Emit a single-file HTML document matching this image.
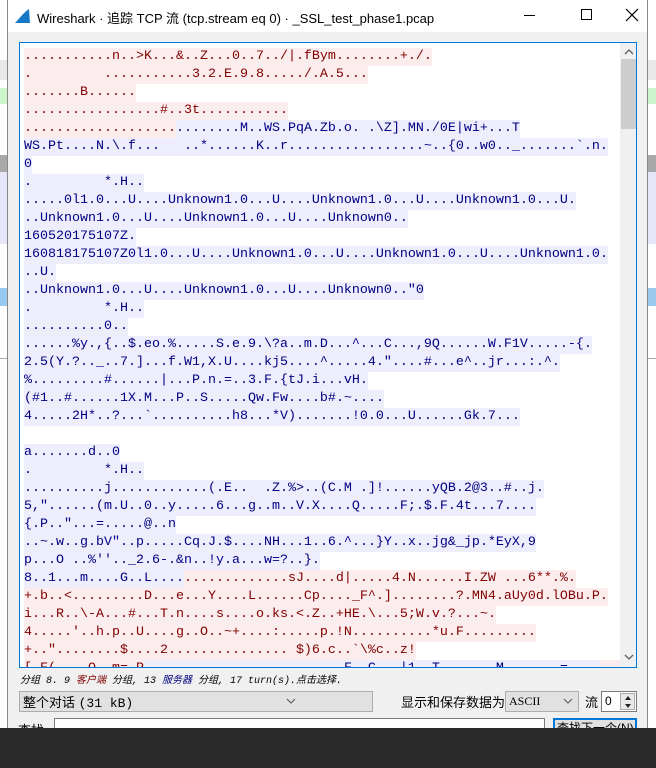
<!DOCTYPE html>
<html><head><meta charset="utf-8"><style>
*{margin:0;padding:0;box-sizing:border-box}
body{width:656px;height:768px;overflow:hidden;background:#fff;position:relative;font-family:"Liberation Sans","Noto Sans CJK SC",sans-serif}
.abs{position:absolute}
#dlg{left:7px;top:0;width:641px;height:728px;background:#f0f0f0;border-left:1px solid #888;border-right:1px solid #888}
#title{left:8px;top:0;width:639px;height:32px;background:#fff}
#ta{left:19px;top:42px;width:618px;height:626px;border:1px solid #0078d7;background:#fff;overflow:hidden}
#txt{position:absolute;left:4px;top:5px;font-family:"Liberation Mono",monospace;font-size:13.33px;line-height:18px}
.ln{height:18px;white-space:pre}
.ln span{display:inline-block;height:18px;vertical-align:top}
.r{background:#fbeded;color:#800000}
.b{background:#ededfb;color:#000080}
</style></head><body>
<div class="abs" style="left:0;top:60px;width:8px;height:20px;background:#e8e8e8"></div>
<div class="abs" style="left:0;top:88px;width:8px;height:16px;background:#ccf5cc"></div>
<div class="abs" style="left:0;top:155px;width:8px;height:17px;background:#a8a8a8"></div>
<div class="abs" style="left:0;top:172px;width:8px;height:72px;background:#e6e6fa"></div>
<div class="abs" style="left:0;top:288px;width:8px;height:18px;background:#99c9ef"></div>
<div class="abs" style="left:0;top:358px;width:8px;height:1px;background:#aaa"></div>
<div class="abs" style="left:648px;top:60px;width:8px;height:20px;background:#e8e8e8"></div>
<div class="abs" style="left:648px;top:88px;width:8px;height:16px;background:#ccf5cc"></div>
<div class="abs" style="left:648px;top:155px;width:8px;height:17px;background:#a8a8a8"></div>
<div class="abs" style="left:648px;top:172px;width:8px;height:72px;background:#e6e6fa"></div>
<div class="abs" style="left:648px;top:288px;width:8px;height:18px;background:#99c9ef"></div>
<div class="abs" style="left:648px;top:358px;width:8px;height:1px;background:#aaa"></div>

<div id="dlg" class="abs"></div>
<div id="title" class="abs">
<svg class="abs" style="left:6px;top:7px" width="18" height="18" viewBox="0 0 18 18"><path d="M1 16 C5 12 9 6 15 2 L16 16 Z" fill="#1679c7"/></svg>
<div class="abs" style="left:29px;top:8px;font-size:13px;color:#000;white-space:nowrap">Wireshark · 追踪 TCP 流 (tcp.stream eq 0) · _SSL_test_phase1.pcap</div>
<div class="abs" style="left:516px;top:15px;width:11px;height:1px;background:#000"></div>
<div class="abs" style="left:573px;top:9px;width:11px;height:11px;border:1px solid #000"></div>
<svg class="abs" style="left:617px;top:8px" width="14" height="14"><path d="M1 1L13 13M13 1L1 13" stroke="#000" stroke-width="1.2"/></svg>
</div>

<div id="ta" class="abs">
<div id="txt">
<div class="ln"><span class="r">...........n..&gt;K...&amp;..Z...0..7../|.fBym........+./.</span></div>
<div class="ln"><span class="r">.         ...........3.2.E.9.8...../.A.5...</span></div>
<div class="ln"><span class="r">.......B......</span></div>
<div class="ln"><span class="r">.................#..3t...........</span></div>
<div class="ln"><span class="r">...................</span><span class="b">........M..WS.PqA.Zb.o. .\Z].MN./0E|wi+...T</span></div>
<div class="ln"><span class="b">WS.Pt....N.\.f...   ..*......K..r.................~..{0..w0.._.......`.n.</span></div>
<div class="ln"><span class="b">0</span></div>
<div class="ln"><span class="b">.         *.H..</span></div>
<div class="ln"><span class="b">.....0l1.0...U....Unknown1.0...U....Unknown1.0...U....Unknown1.0...U.</span></div>
<div class="ln"><span class="b">..Unknown1.0...U....Unknown1.0...U....Unknown0..</span></div>
<div class="ln"><span class="b">160520175107Z.</span></div>
<div class="ln"><span class="b">160818175107Z0l1.0...U....Unknown1.0...U....Unknown1.0...U....Unknown1.0.</span></div>
<div class="ln"><span class="b">..U.</span></div>
<div class="ln"><span class="b">..Unknown1.0...U....Unknown1.0...U....Unknown0.."0</span></div>
<div class="ln"><span class="b">.         *.H..</span></div>
<div class="ln"><span class="b">..........0..</span></div>
<div class="ln"><span class="b">......%y.,{..$.eo.%.....S.e.9.\?a..m.D...^...C...,9Q......W.F1V.....-{.</span></div>
<div class="ln"><span class="b">2.5(Y.?.._..7.]...f.W1,X.U....kj5....^.....4."....#...e^..jr...:.^.</span></div>
<div class="ln"><span class="b">%.........#......|...P.n.=..3.F.{tJ.i...vH.</span></div>
<div class="ln"><span class="b">(#1..#......1X.M...P..S.....Qw.Fw....b#.~....</span></div>
<div class="ln"><span class="b">4.....2H*..?...`..........h8...*V).......!0.0...U......Gk.7...</span></div>
<div class="ln"></div>
<div class="ln"><span class="b">a.......d..0</span></div>
<div class="ln"><span class="b">.         *.H..</span></div>
<div class="ln"><span class="b">..........j............(.E..  .Z.%&gt;..(C.M .]!......yQB.2@3..#..j.</span></div>
<div class="ln"><span class="b">5,"......(m.U..0..y.....6...g..m..V.X....Q.....F;.$.F.4t...7....</span></div>
<div class="ln"><span class="b">{.P.."...=.....@..n</span></div>
<div class="ln"><span class="b">..~.w..g.bV"..p.....Cq.J.$....NH...1..6.^...}Y..x..jg&amp;_jp.*EyX,9</span></div>
<div class="ln"><span class="b">p...O ..%''.._2.6-.&amp;n..!y.a...w=?..}.</span></div>
<div class="ln"><span class="b">8..1...m....G..L....</span><span class="r">.............sJ....d|.....4.N......I.ZW ...6**.%.</span></div>
<div class="ln"><span class="r">+.b..&lt;.........D...e...Y....L......Cp...._F^.]........?.MN4.aUy0d.lOBu.P.</span></div>
<div class="ln"><span class="r">i...R..\-A...#...T.n....s....o.ks.&lt;.Z..+HE.\...5;W.v.?...~.</span></div>
<div class="ln"><span class="r">4.....'..h.p..U....g..O..~+....:.....p.!N..........*u.F.........</span></div>
<div class="ln"><span class="r">+.."........$....2............... $)6.c..`\%c..z!</span></div>
<div class="ln"><span class="r">[.F(....O..m=.P</span><span class="b">.........................F..C...|1..T.......M.......=....</span><span class="r">..........^..</span></div>
</div>
<div class="abs" style="left:600px;top:0;width:17px;height:624px;background:#f0f0f0"></div>
<div class="abs" style="left:601px;top:16px;width:15px;height:70px;background:#cdcdcd"></div>
<svg class="abs" style="left:604px;top:6px" width="10" height="6"><path d="M1 5L5 1L9 5" stroke="#606060" fill="none" stroke-width="1.3"/></svg>
<svg class="abs" style="left:604px;top:611px" width="10" height="6"><path d="M1 1L5 5L9 1" stroke="#606060" fill="none" stroke-width="1.3"/></svg>
</div>

<div class="abs" style="left:20px;top:671px;font-size:10px;font-style:italic;white-space:nowrap;color:#000;font-family:'Liberation Mono','Noto Sans CJK SC',monospace">分组 8. 9 <span style="color:#800000">客户端</span> 分组, 13 <span style="color:#000080">服务器</span> 分组, 17 turn(s).点击选择.</div>

<div class="abs" style="left:19px;top:691px;width:354px;height:21px;background:#e1e1e1;border:1px solid #adadad"></div>
<div class="abs" style="left:23px;top:692px;font-size:13px;white-space:nowrap">整个对话 <span style="font-family:'Liberation Mono',monospace">(31 kB)</span></div>
<svg class="abs" style="left:286px;top:698px" width="10" height="6"><path d="M1 1L5 5L9 1" stroke="#555" fill="none"/></svg>

<div class="abs" style="left:401px;top:692px;font-size:13px;white-space:nowrap">显示和保存数据为</div>
<div class="abs" style="left:505px;top:691px;width:74px;height:21px;background:#e1e1e1;border:1px solid #adadad"></div>
<div class="abs" style="left:509px;top:694px;font-size:12px;font-family:'Liberation Serif',serif">ASCII</div>
<svg class="abs" style="left:563px;top:698px" width="10" height="6"><path d="M1 1L5 5L9 1" stroke="#555" fill="none"/></svg>
<div class="abs" style="left:585px;top:692px;font-size:13px">流</div>
<div class="abs" style="left:601px;top:691px;width:36px;height:21px;background:#fff;border:1px solid #7a7a7a"></div>
<div class="abs" style="left:605px;top:694px;font-size:12px">0</div>
<div class="abs" style="left:620px;top:693px;width:15px;height:17px;background:#e8e8e8;border:1px solid #aaa"></div>
<svg class="abs" style="left:624px;top:695px" width="8" height="14"><path d="M1 5L4 1L7 5Z M1 9L4 13L7 9Z" fill="#222"/></svg>

<div class="abs" style="left:18px;top:720px;font-size:13px">查找:</div>
<div class="abs" style="left:54px;top:718px;width:491px;height:12px;background:#fff;border:1px solid #7a7a7a;border-bottom:none"></div>
<div class="abs" style="left:553px;top:718px;width:84px;height:12px;background:#e1e1e1;border:2px solid #0078d7;border-bottom:none;font-size:12px;line-height:16px;padding-left:2px;overflow:hidden;white-space:nowrap">查找下一个(N)</div>
<div class="abs" style="left:0;top:728px;width:656px;height:40px;background:#2b2b2b"></div>
</body></html>
